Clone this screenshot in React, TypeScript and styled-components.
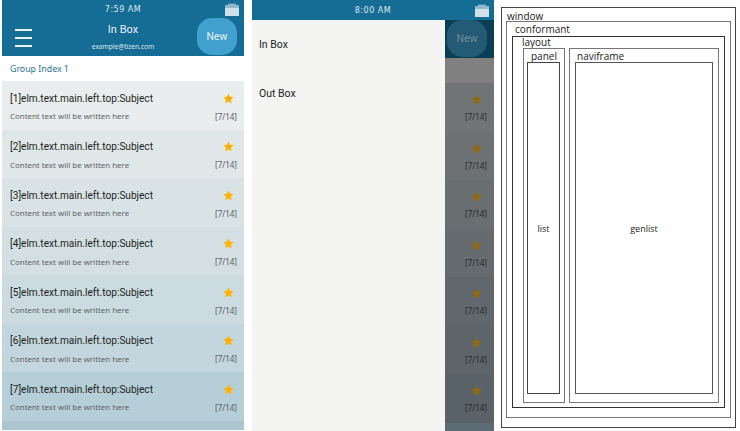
import styled, { createGlobalStyle } from 'styled-components'

const rows = [
  { id: 1, bg: '#e9eded' },
  { id: 2, bg: '#e0e7e8' },
  { id: 3, bg: '#d9e3e6' },
  { id: 4, bg: '#d3dfe3' },
  { id: 5, bg: '#cbdbe0' },
  { id: 6, bg: '#c3d6dd' },
  { id: 7, bg: '#b6ced8' },
]

const GlobalStyle = createGlobalStyle`
  html, body {
    margin: 0;
    padding: 0;
    background: #fff;
    overflow: hidden;
  }
  body {
    font-family: 'Noto Sans', sans-serif;
  }
`

const Star = ({ dim }: { dim?: boolean }) => (
  <svg width='11' height='11' viewBox='0 0 24 24'>
    <path
      d='M12 1l3.3 7.4 8 .8-6 5.4 1.7 7.9-7-4.1-7 4.1 1.7-7.9-6-5.4 8-.8z'
      fill={dim ? '#8f6a12' : '#ffb000'}
    />
  </svg>
)

const Clipboard = () => (
  <svg width='14' height='13' viewBox='0 0 14 13'>
    <path d='M3 2V0.6h8V2z' fill='#8fb7cb' />
    <rect x='0' y='2' width='14' height='2.5' fill='#8fb7cb' />
    <rect x='0' y='4.5' width='14' height='8.5' fill='#cfe0e8' />
  </svg>
)

export default function App() {
  return (
    <>
      <GlobalStyle />
      <Page>
        <Phone>
          <StatusBar>
            <Clock>7:59 AM</Clock>
            <ClipSlot $top={3}>
              <Clipboard />
            </ClipSlot>
          </StatusBar>
          <TitleBar>
            <Burger>
              <i />
              <i />
              <i />
            </Burger>
            <TitleBlock>
              <Title>In Box</Title>
              <Email>example@tizen.com</Email>
            </TitleBlock>
            <NewButton>New</NewButton>
          </TitleBar>
          <GroupIndex>Group Index 1</GroupIndex>
          {rows.map(row => (
            <Row key={row.id} $bg={row.bg}>
              <RowTop>
                <Subject>[{row.id}]elm.text.main.left.top:Subject</Subject>
                <StarSlot>
                  <Star />
                </StarSlot>
              </RowTop>
              <RowBottom>
                <Content>Content text will be written here</Content>
                <Count>[7/14]</Count>
              </RowBottom>
            </Row>
          ))}
          <Tail />
        </Phone>

        <Phone>
          <DrawerStatus>
            <Clock>8:00 AM</Clock>
            <ClipSlot $top={4}>
              <Clipboard />
            </ClipSlot>
          </DrawerStatus>
          <DrawerBody>
            <Drawer>
              <DrawerItem>In Box</DrawerItem>
              <DrawerItem>Out Box</DrawerItem>
            </Drawer>
            <Dimmed>
              <DimHeader>
                <DimNew>New</DimNew>
              </DimHeader>
              <DimGroup />
              {rows.map(row => (
                <DimRow key={row.id} $shade={row.id}>
                  <Star dim />
                  <DimCount>[7/14]</DimCount>
                </DimRow>
              ))}
            </Dimmed>
          </DrawerBody>
        </Phone>

        <Diagram>
          <Frame $pad='13px 4px 9px 4px' $color='#444'>
            <Label $left={5} $top={3}>window</Label>
            <Frame $pad='14px 5px 9px 5px' $color='#777'>
              <Label $left={8} $top={2}>conformant</Label>
              <Frame $pad='11px 5px 4px 10px' $color='#333'>
                <Label $left={9} $top={0}>layout</Label>
                <Columns>
                  <Frame $pad='13px 4px 8px 3px' $color='#777' $width='42px'>
                    <Label $left={7} $top={2}>panel</Label>
                    <Frame $color='#444'>
                      <Caption>list</Caption>
                    </Frame>
                  </Frame>
                  <Frame $pad='13px 5px 8px 5px' $color='#777' $grow>
                    <Label $left={7} $top={2}>naviframe</Label>
                    <Frame $color='#555'>
                      <Caption>genlist</Caption>
                    </Frame>
                  </Frame>
                </Columns>
              </Frame>
            </Frame>
          </Frame>
        </Diagram>
      </Page>
    </>
  )
}

const Page = styled.div`
  display: flex;
  width: 740px;
  height: 431px;
  padding-left: 2px;
  box-sizing: border-box;
  overflow: hidden;
`
const Phone = styled.div`
  width: 242px;
  height: 431px;
  margin-right: 8px;
  display: flex;
  flex-direction: column;
  overflow: hidden;
  flex: none;
`
const StatusBar = styled.div`
  height: 19px;
  background: #156c95;
  display: flex;
  align-items: center;
  justify-content: center;
  position: relative;
  flex: none;
`
const DrawerStatus = styled(StatusBar)`
  height: 20px;
`
const Clock = styled.span`
  color: #dce9ef;
  font: 8px 'DejaVu Sans', sans-serif;
  letter-spacing: 0.5px;
`
const ClipSlot = styled.div<{ $top: number }>`
  position: absolute;
  right: 5px;
  top: ${p => p.$top}px;
  line-height: 0;
`
const TitleBar = styled.div`
  height: 37px;
  background: #156c95;
  display: flex;
  position: relative;
  justify-content: center;
  flex: none;
`
const Burger = styled.div`
  position: absolute;
  left: 13px;
  top: 10px;
  width: 17px;
  display: flex;
  flex-direction: column;
  gap: 6px;
  i {
    display: block;
    height: 2px;
    background: #eef5f8;
  }
`
const TitleBlock = styled.div`
  display: flex;
  flex-direction: column;
  align-items: center;
`
const Title = styled.div`
  color: #e8f1f5;
  font: 11px/14px Roboto, sans-serif;
  margin-top: 4px;
`
const Email = styled.div`
  color: #d8e7ee;
  font-size: 6.6px;
  line-height: 10px;
  margin-top: 5px;
`
const NewButton = styled.div`
  position: absolute;
  right: 7px;
  top: -1px;
  width: 40px;
  height: 37px;
  border-radius: 15px;
  background: #41a0cd;
  color: #e6f3f8;
  font: 10.5px Roboto, sans-serif;
  display: flex;
  align-items: center;
  justify-content: center;
`
const GroupIndex = styled.div`
  height: 25px;
  background: #fff;
  color: #2a7196;
  font-size: 8.8px;
  line-height: 27px;
  padding-left: 8px;
  flex: none;
`
const Row = styled.div<{ $bg: string }>`
  height: 48.5px;
  background: ${p => p.$bg};
  box-sizing: border-box;
  padding: 9px 7px 0 8px;
  flex: none;
`
const RowTop = styled.div`
  display: flex;
  justify-content: space-between;
  align-items: center;
  height: 16px;
`
const Subject = styled.span`
  color: #1c1f20;
  font: 10.1px Roboto, sans-serif;
`
const StarSlot = styled.span`
  line-height: 0;
  margin-right: 3px;
`
const RowBottom = styled.div`
  display: flex;
  justify-content: space-between;
  align-items: center;
  margin-top: 4px;
  height: 12px;
`
const Content = styled.span`
  color: #5b6265;
  font-size: 7.9px;
`
const Count = styled.span`
  color: #555c5f;
  font-size: 8px;
`
const Tail = styled.div`
  flex: 1;
  background: #acc6d1;
  margin-bottom: 1px;
`
const DrawerBody = styled.div`
  flex: 1;
  display: flex;
  min-height: 0;
`
const Drawer = styled.div`
  width: 193px;
  background: #f4f4f2;
  display: flex;
  flex-direction: column;
  flex: none;
`
const DrawerItem = styled.div`
  height: 48.5px;
  color: #222;
  font: 10.5px/50px Roboto, sans-serif;
  padding-left: 7px;
`
const Dimmed = styled.div`
  flex: 1;
  display: flex;
  flex-direction: column;
  background: #5d6c74;
`
const DimHeader = styled.div`
  height: 38px;
  background: #0b3d53;
  display: flex;
  padding-left: 2px;
  flex: none;
`
const DimNew = styled.div`
  width: 40px;
  height: 37px;
  border-radius: 15px;
  background: #245a73;
  color: #6f8d9b;
  font: 10.5px Roboto, sans-serif;
  display: flex;
  align-items: center;
  justify-content: center;
`
const DimGroup = styled.div`
  height: 25px;
  background: #808080;
  flex: none;
`
const DimRow = styled.div<{ $shade: number }>`
  height: 48.5px;
  flex: none;
  box-sizing: border-box;
  background: rgb(${p => 117 - p.$shade * 4}, ${p => 119 - p.$shade * 3}, ${p => 119 - p.$shade * 2});
  padding: 11px 7px 0 0;
  display: flex;
  flex-direction: column;
  align-items: flex-end;
  svg {
    margin-right: 5px;
  }
`
const DimCount = styled.span`
  color: #26292a;
  font-size: 8px;
  line-height: 12px;
  margin-top: 6px;
`
const Diagram = styled.div`
  flex: none;
  width: 235px;
  height: 421px;
  margin: 7px 0 0 -1px;
  display: flex;
`
const Frame = styled.div<{ $pad?: string; $color: string; $width?: string; $grow?: boolean }>`
  position: relative;
  box-sizing: border-box;
  border: 1px solid ${p => p.$color};
  padding: ${p => p.$pad ?? '0'};
  display: flex;
  flex: ${p => (p.$width ? `0 0 ${p.$width}` : '1')};
  min-width: 0;
  background: #fff;
`
const Columns = styled.div`
  flex: 1;
  display: flex;
  gap: 4px;
`
const Label = styled.span<{ $left: number; $top: number }>`
  position: absolute;
  left: ${p => p.$left}px;
  top: ${p => p.$top}px;
  color: #222;
  font: 10px/10px 'Open Sans', sans-serif;
`
const Caption = styled.span`
  margin: auto;
  color: #222;
  font: 9px 'Open Sans', sans-serif;
`
